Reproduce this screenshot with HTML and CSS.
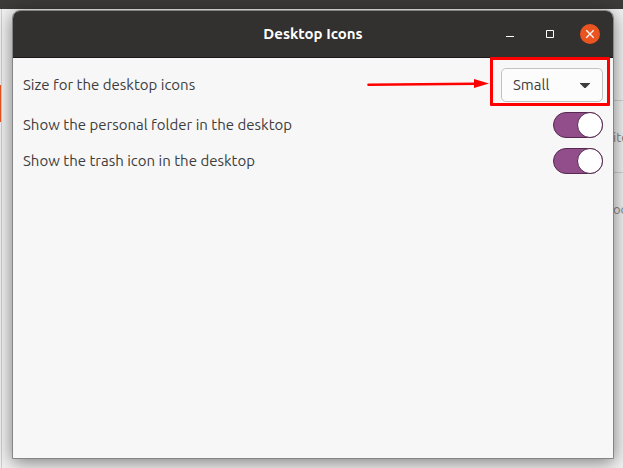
FILE: index.html
```html
<!DOCTYPE html>
<html lang="en">
<head>
<meta charset="utf-8">
<title>Desktop Icons</title>
<link rel="stylesheet" href="styles.css">
</head>
<body>
<div class="backdrop">
  <div class="topbar"></div>
  <div class="under">
    <div class="edge"><span class="accent"></span></div>
    <div class="list">
      <div class="item"></div>
      <div class="item"><span>ite</span></div>
      <div class="item"><span>oc</span></div>
    </div>
  </div>
</div>
<main class="window">
  <header class="titlebar">
    <h1>Desktop Icons</h1>
    <div class="controls">
      <button type="button" aria-label="Minimize"><svg width="20" height="20" viewBox="0 0 20 20"><path d="M6 12.5h8" stroke="#fff"/></svg></button>
      <button type="button" aria-label="Maximize"><svg width="20" height="20" viewBox="0 0 20 20"><path d="M6.500 6.500h7v7h-7z" fill="none" stroke="#fff"/></svg></button>
      <button type="button" class="close" aria-label="Close"><svg width="20" height="20" viewBox="0 0 20 20"><path d="M6.300 6.300l7.400 7.400M13.700 6.300l-7.400 7.400" stroke="#fff" stroke-width="1.300"/></svg></button>
    </div>
  </header>
  <form class="settings">
    <div class="row size-row">
      <label for="size">Size for the desktop icons</label>
      <div class="picker">
        <select id="size"><option>Small</option><option>Standard</option><option>Large</option></select>
        <svg class="caret" width="10" height="5" viewBox="0 0 10 5"><path d="M0 0h10v.6L5.600 5H4.400L0 .6z" fill="#3d3d3d"/></svg>
        <div class="callout">
          <svg width="122" height="10" viewBox="0 0 122 10"><path d="M1.500 5.700L108 4.700" stroke="#f00" stroke-width="2.600" stroke-linecap="round"/><path d="M107 0l15 4.500L107 9z" fill="#f00"/></svg>
        </div>
      </div>
    </div>
    <div class="row">
      <label for="home">Show the personal folder in the desktop</label>
      <input id="home" class="switch" type="checkbox" role="switch" checked>
    </div>
    <div class="row">
      <label for="trash">Show the trash icon in the desktop</label>
      <input id="trash" class="switch" type="checkbox" role="switch" checked>
    </div>
  </form>
</main>
</body>
</html>
```
FILE: styles.css
```css
*,
*::before {
  box-sizing: border-box;
}

body {
  margin: 0;
  min-height: 100vh;
  padding: 10px 9px 9px 12px;
  display: flex;
  overflow: hidden;
  background: #f3f3f3;
  color: #3d3d3d;
  font: 15px/20px Ubuntu, "Noto Sans", "Open Sans", sans-serif;
}

.backdrop {
  position: absolute;
  inset: 0;
  display: flex;
  flex-direction: column;
  overflow: hidden;
}

.topbar {
  height: 9px;
  background: #3c3b39;
}

.under {
  flex: 1;
  display: flex;
  justify-content: space-between;
}

.edge {
  width: 2px;
  padding-top: 76px;
  border-right: 1px solid #cfcfcf;
}

.accent {
  display: block;
  height: 37px;
  background: #e95420;
}

.list {
  width: 10px;
  padding-top: 20px;
  color: #858585;
  font-size: 13px;
}

.item {
  height: 72px;
  display: flex;
  align-items: center;
  border-bottom: 1px solid #d2d2d2;
}

.item:last-child {
  border-bottom: 0;
}

.item span {
  white-space: nowrap;
}

.window {
  position: relative;
  flex: 1;
  display: flex;
  flex-direction: column;
  border: 1px solid #858585;
  border-radius: 8px 8px 0 0;
  background: #f7f7f7;
  box-shadow: 0 3px 18px rgba(0, 0, 0, .5);
}

.titlebar {
  height: 47px;
  display: grid;
  grid-template-columns: 1fr auto 1fr;
  align-items: center;
  padding: 0 13px;
  border-bottom: 1px solid #1d1919;
  border-radius: 7px 7px 0 0;
  background: #333030;
  color: #fff;
}

.titlebar h1 {
  grid-column: 2;
  margin: 0;
  font-size: 15px;
  font-weight: 700;
}

.controls {
  display: flex;
  justify-content: flex-end;
  gap: 20px;
}

.controls button {
  width: 20px;
  height: 20px;
  padding: 0;
  border: 0;
  border-radius: 50%;
  background: none;
}

.controls svg {
  display: block;
}

.controls .close {
  background: #e95420;
}

.settings {
  display: flex;
  flex-direction: column;
  gap: 10px;
  padding: 10px;
}

.row {
  display: flex;
  align-items: center;
  justify-content: space-between;
}

.picker {
  position: relative;
  width: 102px;
}

.picker select {
  display: block;
  appearance: none;
  width: 100%;
  height: 34px;
  padding: 0 11px;
  border: 1px solid #c2c2c2;
  border-radius: 5px;
  background: #fcfcfc;
  color: inherit;
  font: inherit;
}

.caret {
  position: absolute;
  top: 15px;
  right: 13px;
}

.callout {
  position: absolute;
  inset: -11px -7px -4px -11px;
  border: 3px solid #f00;
  border-radius: 1px;
  pointer-events: none;
}

.callout svg {
  position: absolute;
  top: 19px;
  right: calc(100% + 4px);
}

.switch {
  appearance: none;
  display: flex;
  justify-content: flex-end;
  width: 50px;
  height: 26px;
  margin: 0;
  border: 1px solid #55294f;
  border-radius: 13px;
  background: #924d8b;
}

.switch::before {
  content: "";
  width: 26px;
  height: 26px;
  margin: -1px;
  border: 1px solid #55294f;
  border-radius: 50%;
  background: #fff;
}

.switch:not(:checked) {
  justify-content: flex-start;
  background: #ddd;
}
```
